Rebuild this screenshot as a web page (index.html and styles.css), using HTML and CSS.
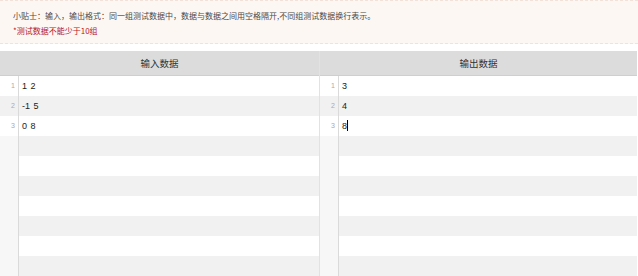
FILE: index.html
```html
<!DOCTYPE html>
<html lang="zh-CN">
<head>
    <meta charset="UTF-8">
    <title>测试数据</title>
    <link rel="stylesheet" href="styles.css">
</head>
<body>

    <div class="tips">
        <p>小贴士：输入，输出格式：同一组测试数据中，数据与数据之间用空格隔开,不同组测试数据换行表示。</p>
        <p class="warn">*测试数据不能少于10组</p>
    </div>

    <div class="editors">
        <div class="panel">
            <div class="panel-head">输入数据</div>
            <div class="panel-body">
                <div class="line"><span class="ln">1</span><span class="code">1 2</span></div>
                <div class="line"><span class="ln">2</span><span class="code">-1 5</span></div>
                <div class="line"><span class="ln">3</span><span class="code">0 8</span></div>
                <div class="line empty"><span class="ln"></span><span class="code"></span></div>
                <div class="line empty"><span class="ln"></span><span class="code"></span></div>
                <div class="line empty"><span class="ln"></span><span class="code"></span></div>
                <div class="line empty"><span class="ln"></span><span class="code"></span></div>
                <div class="line empty"><span class="ln"></span><span class="code"></span></div>
                <div class="line empty"><span class="ln"></span><span class="code"></span></div>
                <div class="line empty"><span class="ln"></span><span class="code"></span></div>
            </div>
        </div>
        <div class="panel">
            <div class="panel-head">输出数据</div>
            <div class="panel-body">
                <div class="line"><span class="ln">1</span><span class="code">3</span></div>
                <div class="line"><span class="ln">2</span><span class="code">4</span></div>
                <div class="line"><span class="ln">3</span><span class="code">8<i class="cursor"></i></span></div>
                <div class="line empty"><span class="ln"></span><span class="code"></span></div>
                <div class="line empty"><span class="ln"></span><span class="code"></span></div>
                <div class="line empty"><span class="ln"></span><span class="code"></span></div>
                <div class="line empty"><span class="ln"></span><span class="code"></span></div>
                <div class="line empty"><span class="ln"></span><span class="code"></span></div>
                <div class="line empty"><span class="ln"></span><span class="code"></span></div>
                <div class="line empty"><span class="ln"></span><span class="code"></span></div>
            </div>
        </div>
    </div>

</body>
</html>
```

FILE: styles.css
```css
/* Page */
body {
    margin: 0;
    font-family: "Noto Sans CJK SC", "Liberation Sans", sans-serif;
    background-color: #ffffff;
    overflow: hidden;
}

/* Tip box on top */
.tips {
    background-color: #fdf7f3;
    border-top: 1px dashed #f3e2da;
    border-bottom: 1px dashed #f3e2da;
    padding: 7px 13px 5px;
    height: 30px;
}

.tips p {
    margin: 0;
    font-size: 8px;
    line-height: 15px;
    color: #4a4a4a;
}

.tips .warn {
    color: #b8141b;
}

/* Two editors side by side */
.editors {
    display: grid;
    grid-template-columns: 319px 317px;
    gap: 1px;
    margin-top: 7px;
    background-color: #e2e2e2;
    width: 637px;
}

.panel {
    background-color: #ffffff;
}

.panel-head {
    height: 24px;
    line-height: 24px;
    background-color: #dcdcdc;
    border-bottom: 1px solid #cfcfcf;
    text-align: center;
    font-size: 9.5px;
    color: #333;
}

.panel-body {
    display: flex;
    flex-direction: column;
}

/* One line of the editor */
.line {
    display: flex;
    height: 20px;
    line-height: 20px;
    font-family: "Liberation Sans", sans-serif;
    font-size: 9px;
    color: #222;
}

.line:nth-child(even) {
    background-color: #f1f1f1;
}

.ln {
    width: 19px;
    flex: none;
    border-right: 1px solid #dadada;
    text-align: right;
    padding-right: 3px;
    box-sizing: border-box;
    color: #aaa;
    font-size: 7px;
}

.line.empty .ln {
    background-color: #f7f7f7;
}

.code {
    flex: 1;
    padding-left: 2px;
    margin-left: 1px;
    word-spacing: 1px;
}

.line.empty .code {
    margin-left: 2px;
}

.cursor {
    display: inline-block;
    width: 1px;
    height: 11px;
    background-color: #000;
    vertical-align: -2px;
}
```
